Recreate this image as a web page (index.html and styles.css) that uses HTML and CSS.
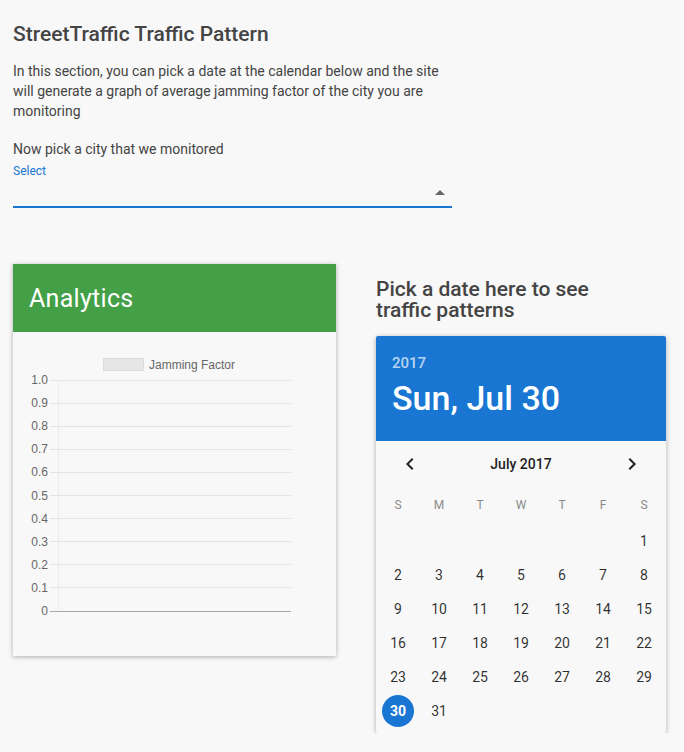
FILE: index.html
```html
<!DOCTYPE html>
<html lang="en">
<head>
<meta charset="utf-8">
<title>StreetTraffic Traffic Pattern</title>
<link rel="stylesheet" href="styles.css">
</head>
<body>
<div class="page">
  <section class="intro">
    <h1 class="title">StreetTraffic Traffic Pattern</h1>
    <p class="lead">In this section, you can pick a date at the calendar below and the site will generate a graph of average jamming factor of the city you are monitoring</p>
    <p class="prompt">Now pick a city that we monitored</p>
    <div class="select-field">
      <div class="select-label">Select</div>
      <div class="select-row"><span class="select-arrow"></span></div>
      <div class="select-underline"></div>
    </div>
  </section>

  <div class="columns">
    <div class="card">
      <div class="card-header">Analytics</div>
      <div class="card-body">
        <svg class="chart" width="323" height="324" viewBox="0 0 323 324">
          <rect x="90.5" y="26.5" width="40" height="12" fill="#e6e6e6" stroke="#dcdcdc"/>
          <text x="136" y="37" class="legend-text">Jamming Factor</text>
          <line x1="45.5" y1="48" x2="45.5" y2="279" stroke="#ececec"/>
          <g stroke="#e4e4e4" stroke-width="1">
            <line x1="37" y1="48.5" x2="278" y2="48.5"/>
            <line x1="37" y1="71.5" x2="278" y2="71.5"/>
            <line x1="37" y1="94.5" x2="278" y2="94.5"/>
            <line x1="37" y1="117.5" x2="278" y2="117.5"/>
            <line x1="37" y1="140.5" x2="278" y2="140.5"/>
            <line x1="37" y1="163.5" x2="278" y2="163.5"/>
            <line x1="37" y1="186.5" x2="278" y2="186.5"/>
            <line x1="37" y1="209.5" x2="278" y2="209.5"/>
            <line x1="37" y1="232.5" x2="278" y2="232.5"/>
            <line x1="37" y1="255.5" x2="278" y2="255.5"/>
          </g>
          <line x1="37" y1="279.5" x2="278" y2="279.5" stroke="#a8a8a8"/>
          <g class="tick-text" text-anchor="end">
            <text x="35" y="52">1.0</text>
            <text x="35" y="75">0.9</text>
            <text x="35" y="98">0.8</text>
            <text x="35" y="121">0.7</text>
            <text x="35" y="144">0.6</text>
            <text x="35" y="168">0.5</text>
            <text x="35" y="191">0.4</text>
            <text x="35" y="214">0.3</text>
            <text x="35" y="237">0.2</text>
            <text x="35" y="260">0.1</text>
            <text x="35" y="283">0</text>
          </g>
        </svg>
      </div>
    </div>

    <div class="picker-col">
      <h2 class="picker-title">Pick a date here to see traffic patterns</h2>
      <div class="calendar">
        <div class="cal-header">
          <div class="cal-year">2017</div>
          <div class="cal-date">Sun, Jul 30</div>
        </div>
        <div class="cal-body">
          <div class="cal-nav">
            <span class="nav-btn"><svg width="24" height="24" viewBox="0 0 24 24"><path d="M15.41 7.41L14 6l-6 6 6 6 1.41-1.41L10.83 12z"/></svg></span>
            <span class="cal-month">July 2017</span>
            <span class="nav-btn"><svg width="24" height="24" viewBox="0 0 24 24"><path d="M10 6L8.59 7.41 13.17 12l-4.58 4.59L10 18l6-6z"/></svg></span>
          </div>
          <div class="cal-grid weekdays">
            <span>S</span><span>M</span><span>T</span><span>W</span><span>T</span><span>F</span><span>S</span>
          </div>
          <div class="cal-grid days">
            <span></span><span></span><span></span><span></span><span></span><span></span><span>1</span>
            <span>2</span><span>3</span><span>4</span><span>5</span><span>6</span><span>7</span><span>8</span>
            <span>9</span><span>10</span><span>11</span><span>12</span><span>13</span><span>14</span><span>15</span>
            <span>16</span><span>17</span><span>18</span><span>19</span><span>20</span><span>21</span><span>22</span>
            <span>23</span><span>24</span><span>25</span><span>26</span><span>27</span><span>28</span><span>29</span>
            <span class="selected"><b>30</b></span><span>31</span>
          </div>
        </div>
      </div>
    </div>
  </div>
</div>
</body>
</html>
```

FILE: styles.css
```css
html, body {
  margin: 0;
  padding: 0;
  background: #f8f8f8;
}

body {
  font-family: Roboto, "Noto Sans", sans-serif;
  color: rgba(0, 0, 0, 0.87);
}

.page {
  padding: 22px 13px 0;
}

.intro {
  width: 439px;
}

.title {
  margin: 0;
  font-size: 21px;
  line-height: 24px;
  font-weight: 500;
  color: #444;
}

.lead {
  margin: 15px 0 0;
  font-size: 14px;
  line-height: 20px;
  color: #444;
}

.prompt {
  margin: 18px 0 0;
  font-size: 14px;
  line-height: 20px;
  color: #444;
}

.select-field {
  margin-top: 4px;
}

.select-label {
  font-size: 12px;
  line-height: 16px;
  color: #1976d2;
}

.select-row {
  height: 27px;
  display: flex;
  justify-content: flex-end;
  align-items: center;
  padding-right: 7px;
}

.select-arrow {
  width: 0;
  height: 0;
  border-left: 5px solid transparent;
  border-right: 5px solid transparent;
  border-bottom: 5px solid #666;
}

.select-underline {
  height: 2px;
  background: #1976d2;
}

.columns {
  margin-top: 56px;
  display: flex;
  align-items: flex-start;
  gap: 40px;
}

.card {
  width: 323px;
  background: #f8f8f8;
  box-shadow: 0 1px 6px rgba(0, 0, 0, 0.12), 0 1px 4px rgba(0, 0, 0, 0.2);
}

.card-header {
  height: 68px;
  background: #43a047;
  color: #fff;
  font-size: 25px;
  letter-spacing: 0.3px;
  display: flex;
  align-items: center;
  padding-left: 16px;
}

.card-body {
  height: 324px;
}

.chart {
  display: block;
}

.legend-text {
  font-family: "Liberation Sans", Arial, sans-serif;
  font-size: 12px;
  fill: #666;
}

.tick-text {
  font-family: "Liberation Sans", Arial, sans-serif;
  font-size: 12px;
  fill: #666;
}

.picker-col {
  width: 290px;
  padding-top: 15px;
}

.picker-title {
  margin: 0 0 15px;
  width: 240px;
  font-size: 21px;
  line-height: 21px;
  font-weight: 500;
  color: #444;
}

.calendar {
  background: #f8f8f8;
  box-shadow: 0 1px 6px rgba(0, 0, 0, 0.12), 0 1px 4px rgba(0, 0, 0, 0.2);
  border-radius: 2px;
  overflow: hidden;
}

.cal-header {
  height: 105px;
  box-sizing: border-box;
  background: #1976d2;
  color: #fff;
  padding: 18px 16px 0;
}

.cal-year {
  font-size: 15px;
  font-weight: 500;
  line-height: 18px;
  color: rgba(255, 255, 255, 0.7);
}

.cal-date {
  margin-top: 6px;
  font-size: 34px;
  font-weight: 500;
  line-height: 40px;
}

.cal-body {
  padding-bottom: 5px;
}

.cal-nav {
  height: 45px;
  display: flex;
  align-items: center;
  justify-content: space-between;
  padding: 0 10px;
}

.nav-btn {
  width: 48px;
  height: 44px;
  display: flex;
  align-items: center;
  justify-content: center;
}

.nav-btn svg {
  fill: #222;
}

.cal-month {
  font-size: 14px;
  font-weight: 500;
  color: #222;
}

.cal-grid {
  display: grid;
  grid-template-columns: repeat(7, 41px);
  justify-content: center;
}

.cal-grid span {
  display: flex;
  align-items: center;
  justify-content: center;
}

.weekdays span {
  height: 38px;
  font-size: 12px;
  color: #8a8a8a;
}

.days span {
  height: 34px;
  font-size: 14px;
  color: rgba(0, 0, 0, 0.82);
}

.days .selected b {
  width: 32px;
  height: 32px;
  border-radius: 50%;
  background: #1976d2;
  color: #fff;
  font-weight: 700;
  display: flex;
  align-items: center;
  justify-content: center;
}
```
